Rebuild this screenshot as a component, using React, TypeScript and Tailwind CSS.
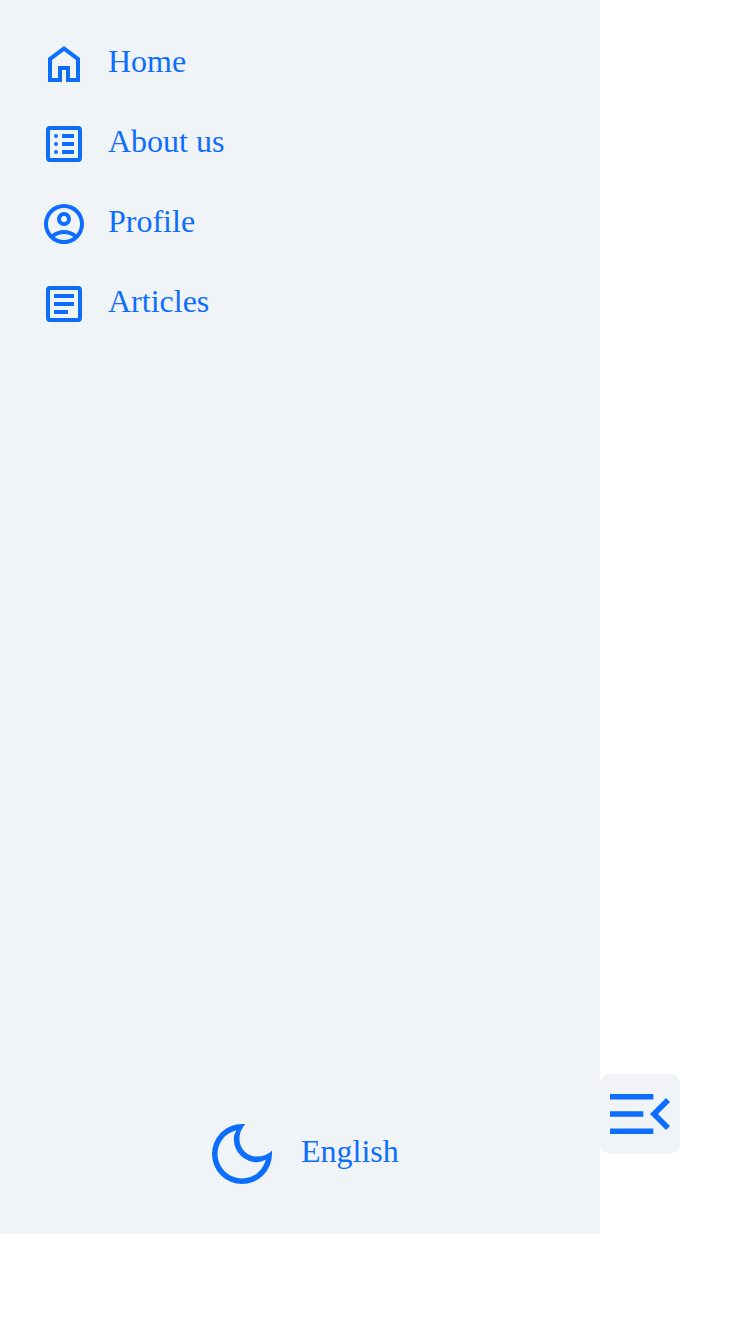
import React from "react";

const items = [
  {
    label: "Home",
    d: "M6 19h3v-6h6v6h3v-9l-6-4.5L6 10zm-2 2V9l8-6l8 6v12h-7v-6h-2v6z",
  },
  {
    label: "About us",
    d: "M5 3h14a2 2 0 0 1 2 2v14a2 2 0 0 1-2 2H5a2 2 0 0 1-2-2V5a2 2 0 0 1 2-2zm0 2v14h14V5zM11 7h6v2h-6zM11 11h6v2h-6zM11 15h6v2h-6zM7 8a1 1 0 1 0 2 0a1 1 0 1 0-2 0zM7 12a1 1 0 1 0 2 0a1 1 0 1 0-2 0zM7 16a1 1 0 1 0 2 0a1 1 0 1 0-2 0z",
  },
  {
    label: "Profile",
    d: "M5.85 17.1q1.275-.975 2.85-1.537T12 15t3.3.563t2.85 1.537q.875-1.025 1.363-2.325T20 12q0-3.325-2.337-5.663T12 4T6.337 6.338T4 12q0 1.475.488 2.775T5.85 17.1M12 13q-1.475 0-2.488-1.012T8.5 9.5t1.013-2.488T12 6t2.488 1.013T15.5 9.5t-1.012 2.488T12 13m0 9q-2.075 0-3.9-.788t-3.175-2.137T2.788 15.9T2 12t.788-3.9t2.137-3.175T8.1 2.788T12 2t3.9.788t3.175 2.137T21.213 8.1T22 12t-.788 3.9t-2.137 3.175t-3.175 2.138T12 22m0-2q1.325 0 2.5-.387t2.15-1.113q-.975-.725-2.15-1.112T12 17t-2.5.388T7.35 18.5q.975.725 2.15 1.113T12 20m0-9q.65 0 1.075-.425T13.5 9.5t-.425-1.075T12 8t-1.075.425T10.5 9.5t.425 1.075T12 11",
  },
  {
    label: "Articles",
    d: "M5 3h14a2 2 0 0 1 2 2v14a2 2 0 0 1-2 2H5a2 2 0 0 1-2-2V5a2 2 0 0 1 2-2zm0 2v14h14V5zM7 7h10v2H7zM7 11h10v2H7zM7 15h7v2H7z",
  },
];

export default function App() {
  return (
    <div className="flex h-[1334px] w-[750px] items-start bg-white font-['Liberation_Serif',serif] text-[32px] leading-[37px] text-[#0d6efd]">
      <aside className="flex h-[1234px] w-[600px] flex-col justify-between bg-[#f0f4f7]">
        <nav className="flex flex-col pl-10 pt-6">
          {items.map((item) => (
            <a key={item.label} className="flex h-20 items-center gap-5">
              <svg className="size-12" viewBox="0 0 24 24" fill="currentColor" fillRule="evenodd">
                <path d={item.d} />
              </svg>
              <span className="pb-1.5">{item.label}</span>
            </a>
          ))}
        </nav>
        <div className="flex items-center gap-[19px] pb-10 pl-[202px]">
          <svg className="size-20" viewBox="0 0 40 40" fill="currentColor" fillRule="evenodd">
            <path d="M20 35A15 15 0 0 1 5 20A15 15 0 0 1 20 5L21.67 5Q18.7 8.3 18.7 12.5A8.8 8.8 0 0 0 27.5 21.3Q31.7 21.3 35 18.33V20A15 15 0 0 1 20 35zM20 32.22A12.22 12.22 0 0 0 31.9 22.8Q29.8 24.1 27.5 24.1A11.6 11.6 0 0 1 15.9 12.5Q15.9 10.2 17.2 8.1A12.22 12.22 0 0 0 20 32.22z" />
          </svg>
          <span className="pb-1.5">English</span>
        </div>
      </aside>
      <button aria-label="Close menu" className="mt-[1074px] size-20 rounded-[10px] bg-[#f0f4f7]">
        <svg className="size-20" viewBox="0 0 40 40" fill="currentColor">
          <path d="M5 10h21.67v2.78H5zM5 18.61h16.67v2.78H5zM5 27.22h21.67V30H5zM33 28l-8-8 8-8 2 2-6 6 6 6z" />
        </svg>
      </button>
    </div>
  );
}
